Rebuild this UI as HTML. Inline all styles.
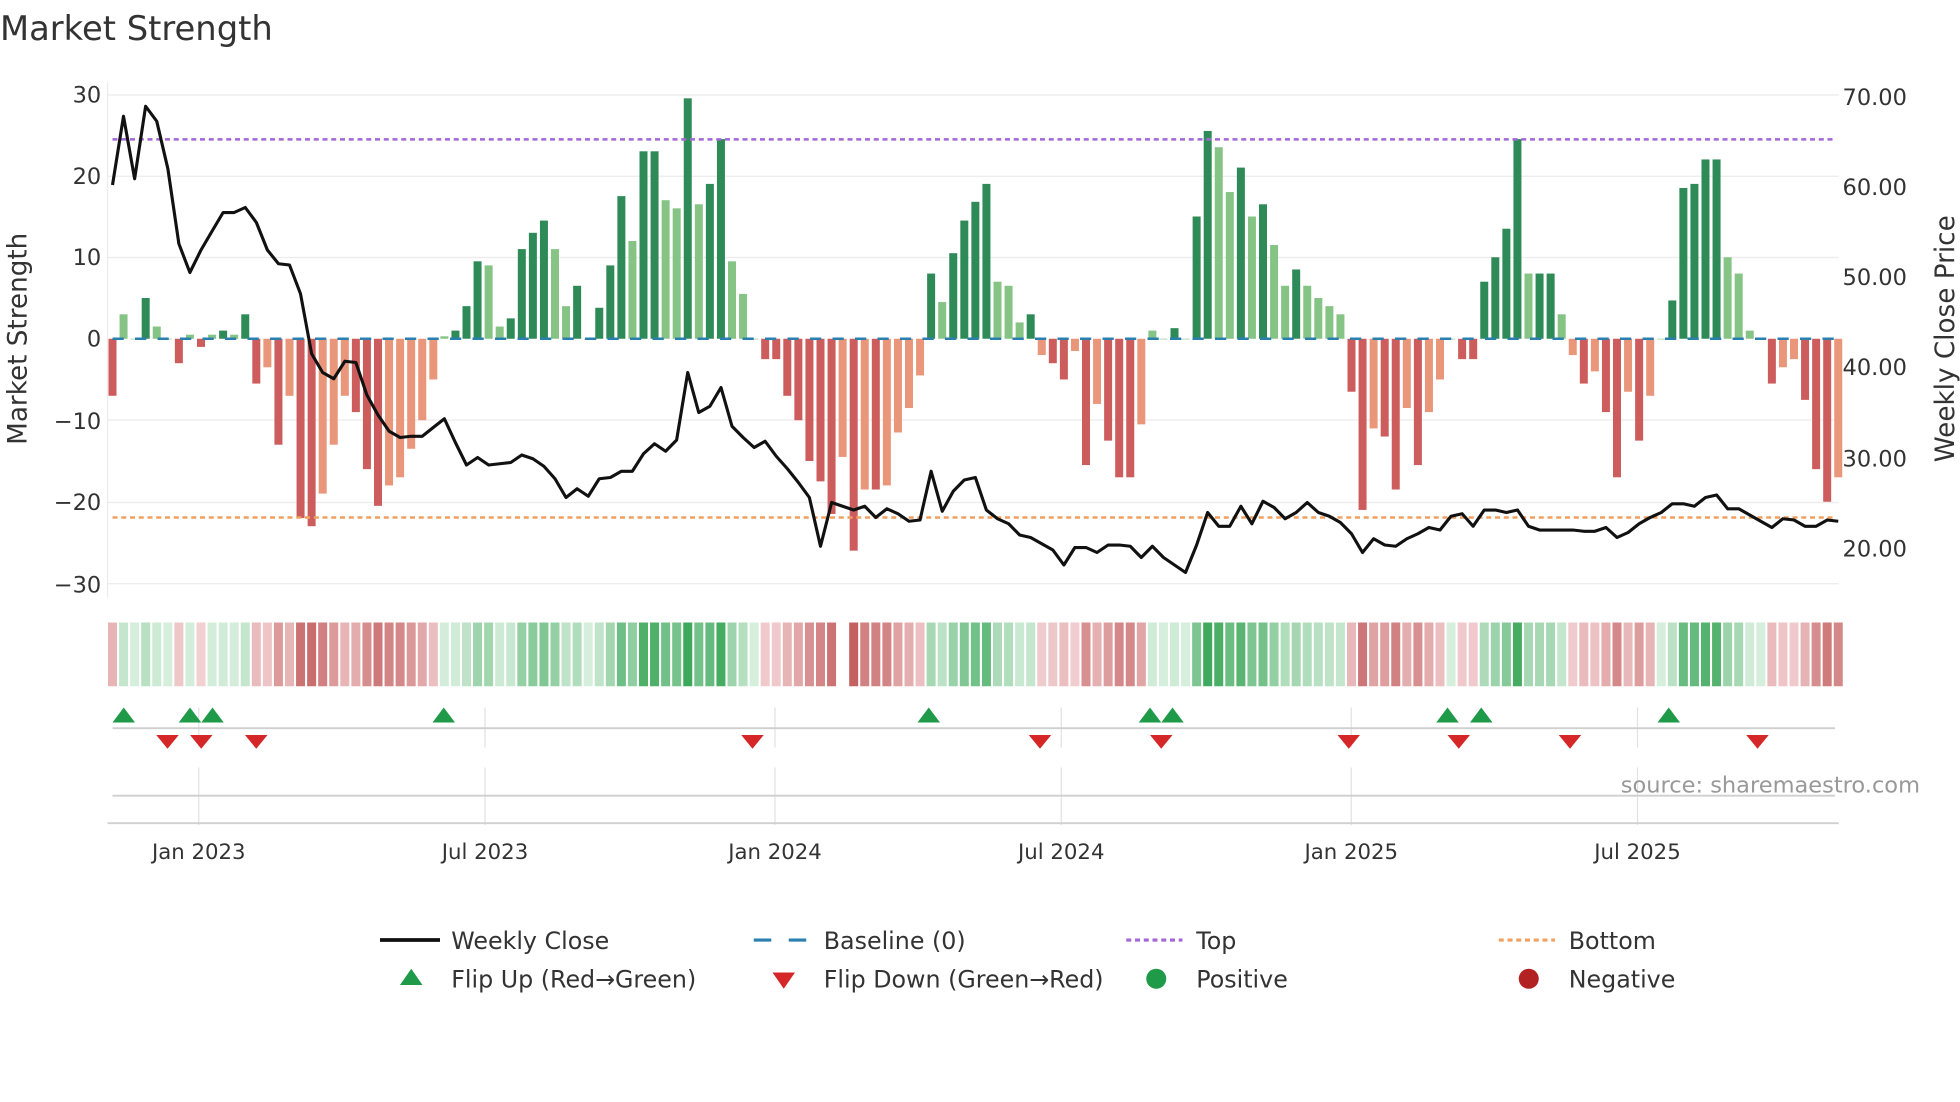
<!DOCTYPE html>
<html><head><meta charset="utf-8"><style>
html,body{margin:0;padding:0;background:#fff;width:1960px;height:1102px;overflow:hidden}
svg{display:block}
text{font-family:"DejaVu Sans","Liberation Sans",sans-serif;fill:#333}
</style></head><body>
<svg id="s" width="1960" height="1102" viewBox="0 0 1568 881.6" xmlns="http://www.w3.org/2000/svg">
<text x="0" y="32" font-size="27">Market Strength</text>
<g font-size="18" text-anchor="end">
<text x="81" y="82">30</text><text x="81" y="147">20</text><text x="81" y="212">10</text><text x="81" y="277">0</text>
<text x="81" y="343">−10</text><text x="81" y="408">−20</text><text x="81" y="474">−30</text>
</g>
<g font-size="18">
<text x="1474" y="84">70.00</text><text x="1474" y="156">60.00</text><text x="1474" y="228">50.00</text><text x="1474" y="300">40.00</text>
<text x="1474" y="373">30.00</text><text x="1474" y="445">20.00</text>
</g>
<text font-size="21" transform="translate(21,271) rotate(-90)" text-anchor="middle">Market Strength</text>
<text font-size="21" transform="translate(1563,271) rotate(-90)" text-anchor="middle">Weekly Close Price</text>
<g stroke="#ececec" stroke-width="1">
<line x1="86" x2="1471" y1="76" y2="76"/><line x1="86" x2="1471" y1="141" y2="141"/><line x1="86" x2="1471" y1="206" y2="206"/>
<line x1="86" x2="1471" y1="336" y2="336"/><line x1="86" x2="1471" y1="402" y2="402"/><line x1="86" x2="1471" y1="467" y2="467"/>
<line x1="86" x2="86" y1="66" y2="478"/>
</g>
<g id="bars"></g>
<line x1="90" x2="1468" y1="271" y2="271" stroke="#2a7fb0" stroke-width="2" stroke-dasharray="9,9"/>
<line x1="90" x2="1468" y1="111.5" y2="111.5" stroke="#a366d6" stroke-width="2" stroke-dasharray="4,3"/>
<line x1="90" x2="1468" y1="414" y2="414" stroke="#f0a060" stroke-width="2" stroke-dasharray="4,3"/>
<polyline id="price" fill="none" stroke="#111" stroke-width="2.5" stroke-linejoin="round"/>
<g id="strip"></g>
<g stroke="#e2e2e2" stroke-width="1">
<line x1="159" x2="159" y1="566" y2="598"/><line x1="388" x2="388" y1="566" y2="598"/><line x1="620" x2="620" y1="566" y2="598"/>
<line x1="849" x2="849" y1="566" y2="598"/><line x1="1081" x2="1081" y1="566" y2="598"/><line x1="1310" x2="1310" y1="566" y2="598"/>
<line x1="159" x2="159" y1="614" y2="660"/><line x1="388" x2="388" y1="614" y2="660"/><line x1="620" x2="620" y1="614" y2="660"/>
<line x1="849" x2="849" y1="614" y2="660"/><line x1="1081" x2="1081" y1="614" y2="660"/><line x1="1310" x2="1310" y1="614" y2="660"/>
</g>
<line x1="90" x2="1468" y1="582.5" y2="582.5" stroke="#cfcfcf" stroke-width="1.5"/>
<line x1="90" x2="1468" y1="636.5" y2="636.5" stroke="#cfcfcf" stroke-width="1.5"/>
<line x1="86" x2="1471" y1="658.5" y2="658.5" stroke="#d0d0d0" stroke-width="1.5"/>
<g id="marks"></g>
<text x="1536" y="634" font-size="18" fill="#999" style="fill:#999" text-anchor="end">source: sharemaestro.com</text>
<g font-size="17" text-anchor="middle">
<text x="159" y="687">Jan 2023</text><text x="388" y="687">Jul 2023</text><text x="620" y="687">Jan 2024</text>
<text x="849" y="687">Jul 2024</text><text x="1081" y="687">Jan 2025</text><text x="1310" y="687">Jul 2025</text>
</g>
<g font-size="19">
<line x1="304" x2="352" y1="752" y2="752" stroke="#111" stroke-width="3"/><text x="361" y="759">Weekly Close</text>
<line x1="603" x2="617" y1="752" y2="752" stroke="#2a7fb0" stroke-width="2.5"/><line x1="631" x2="645" y1="752" y2="752" stroke="#2a7fb0" stroke-width="2.5"/><text x="659" y="759">Baseline (0)</text>
<line x1="901" x2="946" y1="752" y2="752" stroke="#a366d6" stroke-width="2.5" stroke-dasharray="4,3"/><text x="957" y="759">Top</text>
<line x1="1199" x2="1244" y1="752" y2="752" stroke="#f0a060" stroke-width="2.5" stroke-dasharray="4,3"/><text x="1255" y="759">Bottom</text>
<polygon points="320,788 338,788 329,775" fill="#1f9a48"/><text x="361" y="790">Flip Up (Red→Green)</text>
<polygon points="618,778 636,778 627,791" fill="#d62728"/><text x="659" y="790">Flip Down (Green→Red)</text>
<circle cx="925" cy="783" r="8" fill="#1f9a48"/><text x="957" y="790">Positive</text>
<circle cx="1223" cy="783" r="8" fill="#b22222"/><text x="1255" y="790">Negative</text>
</g>
</svg>
<script>
var v=[-7,3,0,5,1.5,0,-3,0.5,-1,0.5,1,0.5,3,-5.5,-3.5,-13,-7,-22,-23,-19,-13,-7,-9,-16,-20.5,-18,-17,-13.5,-10,-5,0.3,1,4,9.5,9,1.5,2.5,11,13,14.5,11,4,6.5,0,3.8,9,17.5,12,23,23,17,16,29.5,16.5,19,24.5,9.5,5.5,0,-2.5,-2.5,-7,-10,-15,-17.5,-21.5,-14.5,-26,-18.5,-18.5,-18,-11.5,-8.5,-4.5,8,4.5,10.5,14.5,16.8,19,7,6.5,2,3,-2,-3,-5,-1.5,-15.5,-8,-12.5,-17,-17,-10.5,1,0,1.3,0,15,25.5,23.5,18,21,15,16.5,11.5,6.5,8.5,6.5,5,4,3,-6.5,-21,-11,-12,-18.5,-8.5,-15.5,-9,-5,0,-2.5,-2.5,7,10,13.5,24.5,8,8,8,3,-2,-5.5,-4,-9,-17,-6.5,-12.5,-7,0,4.7,18.5,19,22,22,10,8,1,0,-5.5,-3.5,-2.5,-7.5,-16,-20,-17];
var ns="http://www.w3.org/2000/svg",B=document.getElementById('bars'),S=document.getElementById('strip');
function X(i){return 90+i*8.85}
function el(p,t,a){var e=document.createElementNS(ns,t);for(var k in a)e.setAttribute(k,a[k]);p.appendChild(e);return e}
function mix(a,b,t){return 'rgb('+a.map(function(c,i){return Math.round(c+(b[i]-c)*t)}).join(',')+')'}
for(var i=0;i<v.length;i++){var x=X(i),y=v[i],p=i?v[i-1]:0;var dark=Math.abs(y)>=Math.abs(p);
var c=y>=0?(dark?'#2e8b57':'#86c486'):(dark?'#cd5c5c':'#e9967a');
var h=Math.abs(y)*6.52;el(B,'rect',{x:x-3.2,y:y>=0?271-h:271,width:6.4,height:Math.max(h,0.5),fill:c});
if(i==66)continue;var t=Math.min(Math.abs(y)/26,1);
var sc=y>=0?mix([214,238,220],[60,168,90],t):mix([244,212,214],[196,96,96],t);
el(S,'rect',{x:x-3.6,y:498,width:7.2,height:51,fill:sc});}
var P=[148,93,143,85,97,135,195,218,200,185,170,170,166,178,200,211,212,235,283,298,303,289,290,316,332,345,350,349,349,342,335,354,372,366,372,371,370,364,367,373,383,398,391,397,383,382,377,377,363,355,361,352,298,330,325,310,341,350,358,353,365,375,386,398,437,402,405,408,405,414,407,411,417,416,377,409,393,384,382,408,415,419,428,430,435,440,452,438,438,442,436,436,437,446,437,446,452,458,436,410,421,421,405,419,401,406,415,410,402,410,413,418,427,442,431,436,437,431,427,422,424,413,411,421,408,408,410,408,421,424,424,424,424,425,425,422,430,426,419,414,410,403,403,405,398,396,407,407,412,417,422,415,416,421,421,416,417];
document.getElementById('price').setAttribute('points',P.map(function(y,i){return X(i).toFixed(1)+','+y}).join(' '));
var M=document.getElementById('marks');
[99,152,170,355,743,920,938,1158,1185,1335].forEach(function(x){el(M,'polygon',{points:(x-9)+',578 '+(x+9)+',578 '+x+',566',fill:'#1f9a48'})});
[134,161,205,602,832,929,1079,1167,1256,1406].forEach(function(x){el(M,'polygon',{points:(x-9)+',588 '+(x+9)+',588 '+x+',599',fill:'#d62728'})});
</script>
</body></html>
